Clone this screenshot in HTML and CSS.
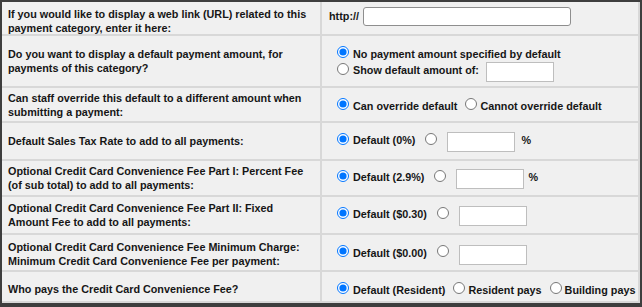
FILE: index.html
```html
<!DOCTYPE html>
<html>
<head>
<meta charset="utf-8">
<link rel="stylesheet" href="styles.css">
</head>
<body>
<div class="frame">
  <div class="grid">
    <div class="q q1">If you would like to display a web link (URL) related to this payment category, enter it here:</div>
    <div class="a a1"><span class="txt">http://</span><input type="text" class="url"></div>

    <div class="q">Do you want to display a default payment amount, for payments of this category?</div>
    <div class="a stack">
      <div class="line"><input type="radio" name="amt" checked><span class="txt">No payment amount specified by default</span></div>
      <div class="line line-b"><input type="radio" name="amt"><span class="txt">Show default amount of:</span><input type="text" class="box box-amt"></div>
    </div>

    <div class="q">Can staff override this default to a different amount when submitting a payment:</div>
    <div class="a a3"><input type="radio" name="ovr" checked><span class="txt">Can override default</span><input type="radio" name="ovr"><span class="txt">Cannot override default</span></div>

    <div class="q">Default Sales Tax Rate to add to all payments:</div>
    <div class="a"><input type="radio" name="tax" checked><span class="txt">Default (0%)</span><input type="radio" name="tax" class="alt"><input type="text" class="box"><span class="txt pct">%</span></div>

    <div class="q">Optional Credit Card Convenience Fee Part I: Percent Fee (of sub total) to add to all payments:</div>
    <div class="a"><input type="radio" name="pct" checked><span class="txt">Default (2.9%)</span><input type="radio" name="pct" class="alt"><input type="text" class="box"><span class="txt pct pct-tight">%</span></div>

    <div class="q">Optional Credit Card Convenience Fee Part II: Fixed Amount Fee to add to all payments:</div>
    <div class="a"><input type="radio" name="fix" checked><span class="txt">Default ($0.30)</span><input type="radio" name="fix" class="alt"><input type="text" class="box"></div>

    <div class="q q7">Optional Credit Card Convenience Fee Minimum Charge: Minimum Credit Card Convenience Fee per payment:</div>
    <div class="a a7"><input type="radio" name="min" checked><span class="txt">Default ($0.00)</span><input type="radio" name="min" class="alt"><input type="text" class="box"></div>

    <div class="q q8">Who pays the Credit Card Convenience Fee?</div>
    <div class="a a8"><input type="radio" name="who" checked><span class="txt">Default (Resident)</span><input type="radio" name="who"><span class="txt">Resident pays</span><input type="radio" name="who"><span class="txt">Building pays</span></div>
  </div>
</div>
</body>
</html>
```
FILE: styles.css
```css
* { box-sizing: border-box; }

body {
  margin: 0;
  background: #f0f0f0;
  font-family: "Liberation Sans", Arial, sans-serif;
  font-weight: bold;
  font-size: 10.8px;
  line-height: 14px;
  color: #161616;
}

.frame {
  width: 642px;
  height: 307px;
  border: 2px solid #3e3e3e;
  border-bottom-width: 4px;
  background: #f0f0f0;
}

.grid {
  display: grid;
  grid-template-columns: 320px 318px;
  grid-template-rows: 34px 52px 35px 38px 36px 38px 37px 31px;
}

.q, .a {
  display: flex;
  align-items: center;
  border-right: 2px solid #d8d8d8;
  border-bottom: 2px solid #d8d8d8;
  white-space: nowrap;
  min-width: 0;
}

.q {
  padding: 0 4px 0 6px;
  white-space: normal;
}

.q1 { padding-top: 6px; }
.q7 { padding-top: 3px; }
.q8 { padding-top: 4px; }

.a { padding-left: 7px; }

.a1 { padding-bottom: 3px; }
.a3 { padding-top: 4px; }
.a7 { padding-top: 2px; }
.a8 { padding-top: 8px; }

.stack {
  flex-direction: column;
  align-items: flex-start;
  justify-content: center;
  padding-top: 6px;
}

.line {
  display: flex;
  align-items: center;
}

.line-b { margin-top: -3px; }

.txt { margin-bottom: 2px; }

input[type="radio"] {
  width: 12px;
  height: 12px;
  margin: 0 3px 5px 8px;
  flex: none;
}

.a > input[type="radio"]:first-child,
.line > input[type="radio"]:first-child {
  margin-left: 8px;
  margin-right: 4px;
}

input[type="radio"].alt { margin-left: 10px; }

.url {
  width: 208px;
  height: 19px;
  margin-left: 4px;
  border: 1px solid #8e8e8e;
  border-radius: 3px;
  background: #fff;
  padding: 1px 2px;
}

.box {
  width: 68px;
  height: 20px;
  margin: 2px 0 0 7px;
  border: 1px solid #bebebe;
  border-radius: 0;
  background: #fff;
  padding: 1px 2px;
  flex: none;
}

.box-amt { margin-left: 7px; }

.pct { margin-left: 6px; }
.pct-tight { margin-left: 4px; }
```
